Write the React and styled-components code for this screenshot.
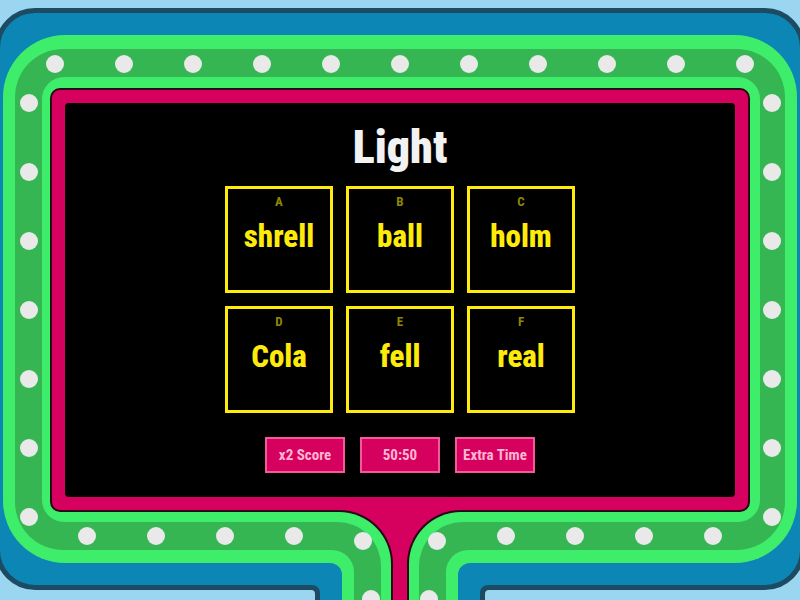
import React from 'react';
import styled, { createGlobalStyle, css } from 'styled-components';

const C = {
  sky: '#9ad6ef',
  ink: '#1c4b63',
  blue: '#0c86b5',
  lime: '#3eee6a',
  green: '#35b653',
  pink: '#d6005f',
  edge: '#2a0716',
  yellow: '#ffeb0a',
};

const GlobalStyle = createGlobalStyle`
  html, body {
    margin: 0;
    padding: 0;
    background: ${C.sky};
  }
  body {
    font-family: "Roboto Condensed", "Open Sans", "Liberation Sans", sans-serif;
    font-stretch: 75%;
  }
`;

const Stage = styled.div`
  position: relative;
  width: 800px;
  height: 600px;
  padding-top: 8px;
  box-sizing: border-box;
  overflow: hidden;
  background: ${C.sky};
`;

const Cabinet = styled.div`
  box-sizing: border-box;
  display: flex;
  width: 810px;
  height: 582px;
  margin-left: -5px;
  padding: 22px 3px;
  border: 5px solid ${C.ink};
  border-radius: 40px;
  background: ${C.blue};
`;

const OuterGlow = styled.div`
  flex: 1;
  display: flex;
  padding: 14px 12px 13px 12px;
  border-radius: 62px;
  background: ${C.lime};
`;

const LightTrack = styled.div`
  flex: 1;
  display: flex;
  padding: 28px 25px 28px 27px;
  border-radius: 48px;
  background: ${C.green};
`;

const InnerGlow = styled.div`
  flex: 1;
  display: flex;
  padding: 11px 10px 10px 8px;
  border-radius: 22px;
  background: ${C.lime};
`;

const Bezel = styled.div`
  flex: 1;
  display: flex;
  padding: 13px;
  border: 2px solid ${C.edge};
  border-radius: 10px;
  background: ${C.pink};
`;

const Screen = styled.div`
  flex: 1;
  display: flex;
  flex-direction: column;
  align-items: center;
  border-radius: 4px;
  background: #000;
`;

const Title = styled.h1`
  margin: 21px 0 0;
  font-size: 46px;
  line-height: 46px;
  font-weight: 900;
  color: #f2f2f2;
`;

const Answers = styled.div`
  display: grid;
  grid-template-columns: repeat(3, 108px);
  grid-auto-rows: 107px;
  gap: 13px;
  margin-top: 16px;
`;

const Tile = styled.div`
  box-sizing: border-box;
  display: flex;
  flex-direction: column;
  align-items: center;
  border: 3px solid ${C.yellow};
`;

const Letter = styled.span`
  margin-top: 6px;
  font-size: 13px;
  line-height: 13px;
  font-weight: 700;
  color: #928800;
`;

const Word = styled.span`
  margin-top: 13px;
  font-size: 31px;
  line-height: 31px;
  font-weight: 800;
  color: ${C.yellow};
`;

const PowerUps = styled.div`
  display: flex;
  gap: 15px;
  margin-top: 24px;
`;

const PowerButton = styled.button`
  box-sizing: border-box;
  display: flex;
  align-items: center;
  justify-content: center;
  width: 80px;
  height: 36px;
  padding: 0;
  border: 2px solid #f25a9a;
  background: ${C.pink};
  color: #ffb6d3;
  font-family: inherit;
  font-stretch: inherit;
  font-size: 15px;
  font-weight: 700;
  white-space: nowrap;
`;

/* the stand under the screen: two strips bending down round a pink stem */
const Neck = styled.div`
  position: absolute;
  left: 200px;
  top: 510px;
  width: 400px;
  height: 90px;
  display: flex;
  justify-content: space-between;
  background: ${C.pink};
`;

const NeckSide = styled.div`
  box-sizing: border-box;
  width: 193px;
  display: flex;
  background: ${C.lime};
  border-top: 2px solid ${C.edge};
  ${p => p.$side === 'left'
    ? css`
        border-right: 2px solid ${C.edge};
        border-top-right-radius: 54px;
        padding: 10px 10px 0 0;
      `
    : css`
        border-left: 2px solid ${C.edge};
        border-top-left-radius: 54px;
        padding: 10px 0 0 10px;
      `}
`;

const NeckLayer = styled.div`
  flex: 1;
  display: flex;
  background: ${p => p.$bg};
  ${p => p.$side === 'left'
    ? css`
        padding: ${p.$t}px ${p.$s}px 0 0;
        border-top-right-radius: ${p.$r}px;
      `
    : css`
        padding: ${p.$t}px 0 0 ${p.$s}px;
        border-top-left-radius: ${p.$r}px;
      `}
`;

const neckLayers = [
  { bg: C.green, t: 28, s: 27, r: 44 },
  { bg: C.lime, t: 13, s: 12, r: 22 },
  { bg: C.blue, t: 22, s: 22, r: 12 },
  { bg: C.ink, t: 5, s: 5, r: 8 },
  { bg: C.sky, t: 0, s: 0, r: 4 },
];

function NeckStrip({ side }) {
  const inner = neckLayers.reduceRight(
    (child, l) => (
      <NeckLayer $side={side} $bg={l.bg} $t={l.t} $s={l.s} $r={l.r}>
        {child}
      </NeckLayer>
    ),
    null
  );
  return <NeckSide $side={side}>{inner}</NeckSide>;
}

const Lights = styled.div`
  position: absolute;
  inset: 0;
  pointer-events: none;
`;

const Bulb = styled.span`
  position: absolute;
  width: 18px;
  height: 18px;
  border-radius: 50%;
  background: #e9e9e9;
  transform: translate(-50%, -50%);
`;

const bulbs = [
  ...Array.from({ length: 11 }, (_, i) => [55 + 69 * i, 64]),
  ...Array.from({ length: 7 }, (_, i) => [29, 103 + 69 * i]),
  ...Array.from({ length: 7 }, (_, i) => [772, 103 + 69 * i]),
  [87, 536], [156, 536], [225, 536], [294, 536], [363, 541],
  [437, 541], [506, 536], [575, 536], [644, 536], [713, 536],
  [371, 599], [429, 599],
];

const answers = [
  ['A', 'shrell'],
  ['B', 'ball'],
  ['C', 'holm'],
  ['D', 'Cola'],
  ['E', 'fell'],
  ['F', 'real'],
];

export default function App() {
  return (
    <Stage>
      <GlobalStyle />
      <Cabinet>
        <OuterGlow>
          <LightTrack>
            <InnerGlow>
              <Bezel>
                <Screen>
                  <Title>Light</Title>
                  <Answers>
                    {answers.map(([letter, word]) => (
                      <Tile key={letter}>
                        <Letter>{letter}</Letter>
                        <Word>{word}</Word>
                      </Tile>
                    ))}
                  </Answers>
                  <PowerUps>
                    <PowerButton>x2 Score</PowerButton>
                    <PowerButton>50:50</PowerButton>
                    <PowerButton>Extra Time</PowerButton>
                  </PowerUps>
                </Screen>
              </Bezel>
            </InnerGlow>
          </LightTrack>
        </OuterGlow>
      </Cabinet>
      <Neck>
        <NeckStrip side="left" />
        <NeckStrip side="right" />
      </Neck>
      <Lights>
        {bulbs.map(([x, y], i) => (
          <Bulb key={i} style={{ left: x, top: y }} />
        ))}
      </Lights>
    </Stage>
  );
}
